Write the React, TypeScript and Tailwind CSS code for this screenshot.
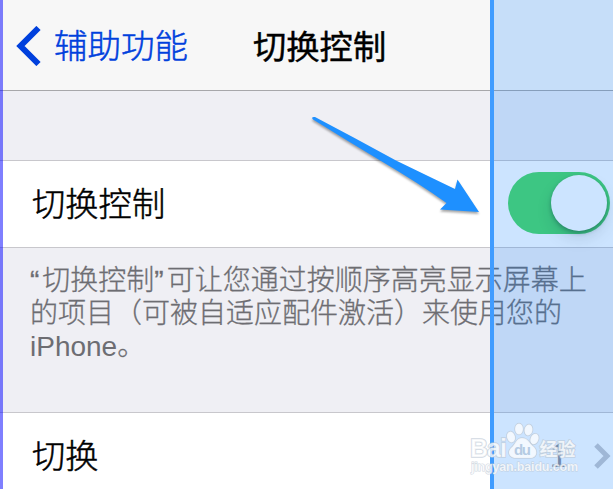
import type { ReactNode } from 'react';

const Header = () => (
  <header className="flex h-[91px] shrink-0 items-center border-b border-[#a7a7aa] bg-[#f7f7f7] pl-[16px]">
    <svg width="26" height="40" viewBox="0 0 26 40" fill="none" className="mt-[2px] shrink-0">
      <path d="M22.500 2 L4.500 20 L22.500 38" stroke="#0040dd" strokeWidth="6" />
    </svg>
    <span className="ml-[12px] w-[199px] pt-[5px] text-[33.5px] font-light text-[#0040dd] [-webkit-text-stroke:0.5px_#0040dd]">
      辅助功能
    </span>
    <h1 className="pt-[5px] text-[33.3px] font-normal text-black [-webkit-text-stroke:0.4px_#000000]">
      切换控制
    </h1>
  </header>
);

const Row = ({ label, children }: { label: string; children?: ReactNode }) => (
  <div className="flex h-[88px] shrink-0 items-center justify-between border-y border-[#c8c7cc] bg-white pl-[32px]">
    <span className="pt-[2px] text-[33.3px] font-light text-black [-webkit-text-stroke:0.5px_#000000]">
      {label}
    </span>
    {children}
  </div>
);

const Toggle = () => (
  <div className="mr-[3px] mb-[2px] flex h-[62px] w-[102px] items-center justify-end rounded-full bg-[#4cd964] pr-[3px]">
    <div className="size-[56px] rounded-full bg-white shadow-[0_2px_4px_rgba(0,0,0,0.3),0_8px_16px_rgba(0,0,0,0.12)]" />
  </div>
);

const Arrow = () => (
  <svg
    className="absolute top-[110px] left-[305px] drop-shadow-[0_2px_1px_rgba(0,0,0,0.35)]"
    width="180"
    height="110"
    viewBox="305 110 180 110"
  >
    <path
      d="M312 118 Q312.500 116.500 315 117 Q355 138 396 160.500 Q430 177 455 189 L457.500 179.500 L479 212 L440 209.500 L446.500 203 Q420 184 381 161 Q346 140 313 119.500 Z"
      fill="#1e90ff"
    />
  </svg>
);

const Watermark = () => (
  <svg
    className="absolute top-[420px] left-[466px]"
    width="116"
    height="58"
    viewBox="466 420 116 58"
    fontFamily='"Liberation Sans", "Noto Sans CJK SC", sans-serif'
  >
    <g
      fill="#ffffff"
      fillOpacity="0.75"
      stroke="#bac6d3"
      strokeOpacity="0.7"
      strokeWidth="1.5"
      paintOrder="stroke"
    >
      <text x="470" y="457" fontSize="25" fontWeight="700" textLength="37">
        Bai
      </text>
      <ellipse cx="511" cy="437" rx="4" ry="5.500" transform="rotate(-15 511 437)" />
      <ellipse cx="519" cy="429" rx="4" ry="5.500" />
      <ellipse cx="528.500" cy="430" rx="4" ry="5.500" transform="rotate(10 528.5 430)" />
      <ellipse cx="534.500" cy="439" rx="4" ry="5.500" transform="rotate(20 534.5 439)" />
      <path d="M522 438 C516 438 516 444 511 448 C507 452 509 458 516 458 L530 458 C537 458 538 451 534 447 C529 443 528 438 522 438 Z" />
      <text x="539.500" y="456" fontSize="18" fontWeight="700">
        经验
      </text>
      <text x="471" y="471" fontSize="12.500" fontWeight="700" strokeWidth="1" textLength="107">
        jingyan.baidu.com
      </text>
    </g>
    <text x="514" y="455" fontSize="15" fontWeight="700" fill="#b5cbe3" textLength="17">
      du
    </text>
  </svg>
);

export default function App() {
  return (
    <main className="relative flex h-[489px] w-[613px] flex-col overflow-hidden bg-[#efeff4] font-['Liberation_Sans','Noto_Sans_CJK_SC',sans-serif] whitespace-nowrap">
      <Header />
      <div className="h-[69px] shrink-0" />
      <Row label="切换控制">
        <Toggle />
      </Row>
      <p className="h-[164px] shrink-0 pt-[16px] pl-[30px] text-[28px] leading-[33px] font-light text-[#6d6d72] [-webkit-text-stroke:0.3px_#6d6d72]">
        <span className="pr-[3px]">“</span>切换控制
        <span className="pr-[3px]">”</span>可让您通过按顺序高亮显示屏幕上
        <br />
        的项目（可被自适应配件激活）来使用您的
        <br />
        <span className="[-webkit-text-stroke:0px]">iPhone</span>。
      </p>
      <Row label="切换">
        <div className="flex items-center gap-[25px] pr-[2px]">
          <span className="text-[33px] text-[#8e8e93]">1</span>
          <svg width="18" height="26" viewBox="0 0 18 26" fill="none">
            <path d="M3 2 L14 13 L3 24" stroke="#c7c7cc" strokeWidth="5" />
          </svg>
        </div>
      </Row>

      {/* scanning cursor */}
      <div className="absolute inset-y-0 left-0 w-[3px] bg-[#0000ff]/50" />
      <div className="absolute inset-y-0 right-0 left-[490px] border-l-4 border-[#409cff] bg-[#007aff]/20 bg-clip-padding" />
      <Arrow />
      <Watermark />
    </main>
  );
}
